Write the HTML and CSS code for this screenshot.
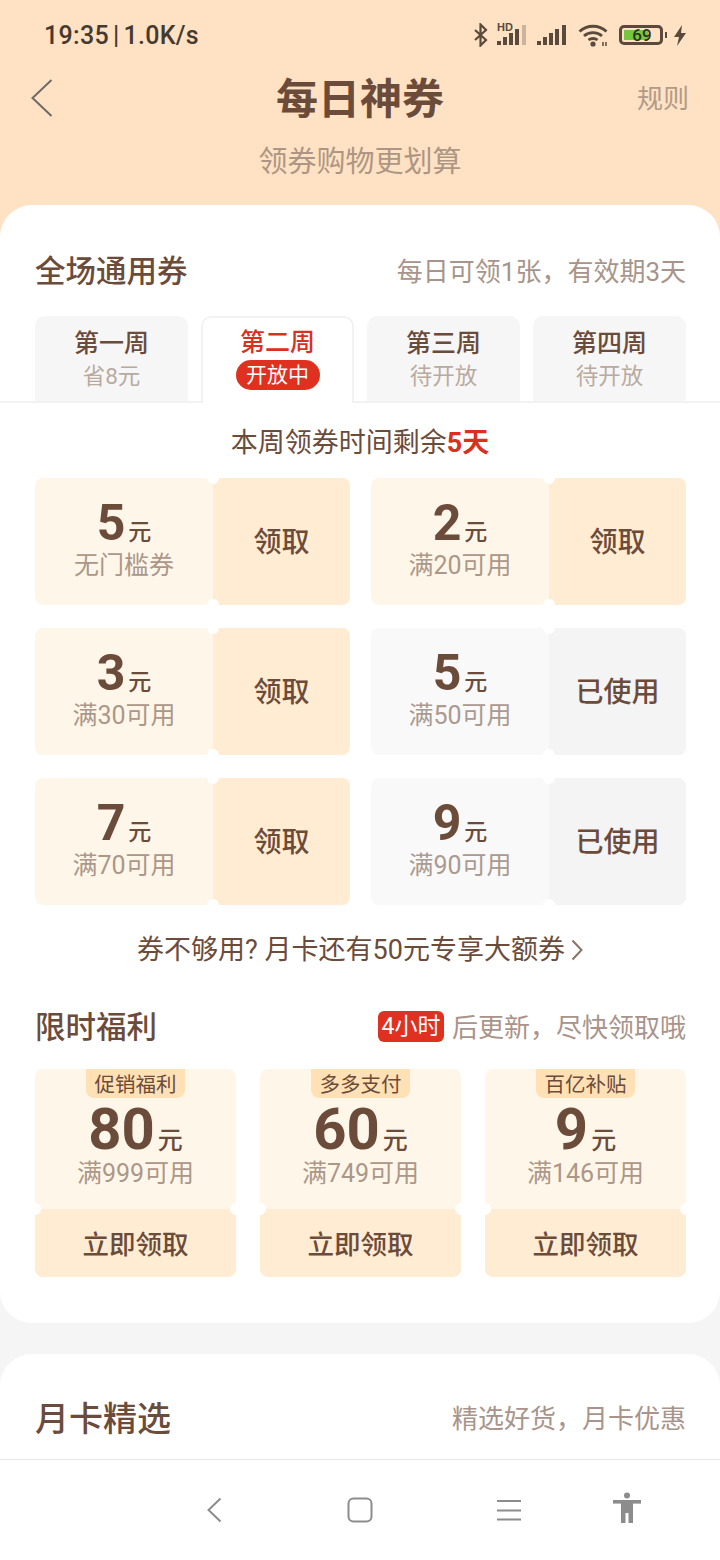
FILE: index.html
```html
<!DOCTYPE html>
<html lang="zh-CN">
<head>
<meta charset="utf-8">
<title>每日神券</title>
<link rel="stylesheet" href="styles.css">
</head>
<body>
<div class="phone">
  <div class="scroll">
    <header class="hero">
      <div class="status">
        <div class="status-text">19:35<span class="status-sep">|</span>1.0K/s</div>
        <div class="status-icons">
          <svg class="ic-bt" viewBox="0 0 16 24"><path d="M2 7l11 10-5.500 5.500V1.500L13 7 2 17" fill="none" stroke="#5a4a3d" stroke-width="2.200"/></svg>
          <div class="sig-wrap">
            <span class="hd">HD</span>
            <svg class="ic-sig" viewBox="0 0 30 21"><g fill="#5a4a3d"><rect x="0" y="17" width="4" height="4"/><rect x="6" y="13" width="4" height="8"/><rect x="12" y="9" width="4" height="12"/><rect x="18" y="5" width="4" height="16"/><rect x="25" y="1" width="4" height="20" opacity=".3"/></g></svg>
          </div>
          <svg class="ic-sig2" viewBox="0 0 30 21"><g fill="#5a4a3d"><rect x="0" y="17" width="4" height="4"/><rect x="6" y="13" width="4" height="8"/><rect x="12" y="9" width="4" height="12"/><rect x="18" y="5" width="4" height="16"/><rect x="25" y="1" width="4" height="20"/></g></svg>
          <svg class="ic-wifi" viewBox="0 0 30 24"><g fill="none" stroke="#5a4a3d" stroke-width="2.800"><path d="M1.500 8.500C9 1.500 21 1.500 28.500 8.500"/><path d="M6 13c5-4.500 13-4.500 18 0"/><path d="M10.500 17c2.500-2 6.500-2 9 0"/></g><circle cx="15" cy="21" r="2.600" fill="#5a4a3d"/><path d="M25 19v4M28 19v4" stroke="#5a4a3d" stroke-width="1.500"/></svg>
          <div class="battery">
            <div class="batt-body"><span class="batt-fill"></span><span class="batt-num">69</span></div>
            <span class="batt-nub"></span>
          </div>
          <svg class="ic-flash" viewBox="0 0 14 21"><path d="M9 0L1 12h5l-2 9 9-13H8z" fill="#5a4a3d"/></svg>
        </div>
      </div>
      <div class="topbar">
        <svg class="back" viewBox="0 0 22 38"><path d="M20.500 1L1.500 19l19 18" fill="none" stroke="#6e6a66" stroke-width="2"/></svg>
        <h1 class="title">每日神券</h1>
        <span class="rules">规则</span>
      </div>
      <p class="subtitle">领券购物更划算</p>
    </header>

    <section class="card main-card">
      <div class="sec-head">
        <h2 class="sec-title">全场通用券</h2>
        <span class="sec-note">每日可领1张，有效期3天</span>
      </div>
      <div class="tabs">
        <div class="tab"><span class="tab-name">第一周</span><span class="tab-sub">省8元</span></div>
        <div class="tab tab-active"><span class="tab-name">第二周</span><span class="tab-pill">开放中</span></div>
        <div class="tab"><span class="tab-name">第三周</span><span class="tab-sub">待开放</span></div>
        <div class="tab"><span class="tab-name">第四周</span><span class="tab-sub">待开放</span></div>
      </div>
      <p class="countdown">本周领券时间剩余<b class="count-num">5天</b></p>
      <div class="tickets">
        <div class="ticket">
          <div class="t-main"><div class="t-amt"><b>5</b><span>元</span></div><div class="t-cond">无门槛券</div></div>
          <div class="t-btn">领取</div>
        </div>
        <div class="ticket">
          <div class="t-main"><div class="t-amt"><b>2</b><span>元</span></div><div class="t-cond">满20可用</div></div>
          <div class="t-btn">领取</div>
        </div>
        <div class="ticket">
          <div class="t-main"><div class="t-amt"><b>3</b><span>元</span></div><div class="t-cond">满30可用</div></div>
          <div class="t-btn">领取</div>
        </div>
        <div class="ticket ticket-used">
          <div class="t-main"><div class="t-amt"><b>5</b><span>元</span></div><div class="t-cond">满50可用</div></div>
          <div class="t-btn">已使用</div>
        </div>
        <div class="ticket">
          <div class="t-main"><div class="t-amt"><b>7</b><span>元</span></div><div class="t-cond">满70可用</div></div>
          <div class="t-btn">领取</div>
        </div>
        <div class="ticket ticket-used">
          <div class="t-main"><div class="t-amt"><b>9</b><span>元</span></div><div class="t-cond">满90可用</div></div>
          <div class="t-btn">已使用</div>
        </div>
      </div>
      <div class="more">券不够用? 月卡还有50元专享大额券
        <svg class="more-arrow" viewBox="0 0 12 22"><path d="M1.500 1.500L10.500 11l-9 9.500" fill="none" stroke="#8a7264" stroke-width="2"/></svg>
      </div>

      <div class="sec-head sec-head-2">
        <h2 class="sec-title">限时福利</h2>
        <div class="limit-note"><span class="limit-badge">4小时</span><span class="sec-note">后更新，尽快领取哦</span></div>
      </div>
      <div class="deals">
        <div class="deal">
          <div class="deal-top"><span class="deal-tag">促销福利</span><div class="deal-amt"><b>80</b><span>元</span></div><div class="deal-cond">满999可用</div></div>
          <div class="deal-btn">立即领取</div>
        </div>
        <div class="deal">
          <div class="deal-top"><span class="deal-tag">多多支付</span><div class="deal-amt"><b>60</b><span>元</span></div><div class="deal-cond">满749可用</div></div>
          <div class="deal-btn">立即领取</div>
        </div>
        <div class="deal">
          <div class="deal-top"><span class="deal-tag">百亿补贴</span><div class="deal-amt"><b>9</b><span>元</span></div><div class="deal-cond">满146可用</div></div>
          <div class="deal-btn">立即领取</div>
        </div>
      </div>
    </section>

    <section class="card month-card">
      <div class="sec-head">
        <h2 class="month-title">月卡精选</h2>
        <span class="sec-note">精选好货，月卡优惠</span>
      </div>
    </section>
  </div>

  <nav class="navbar">
    <svg class="nav-back" viewBox="0 0 15 26"><path d="M13.500 1.500L1.500 13l12 11.500" fill="none" stroke="#8c8c8c" stroke-width="2"/></svg>
    <svg class="nav-home" viewBox="0 0 26 26"><rect x="1.500" y="1.500" width="23" height="23" rx="5" fill="none" stroke="#8c8c8c" stroke-width="2"/></svg>
    <svg class="nav-menu" viewBox="0 0 24 22"><path d="M0 2h24M0 11.500h24M0 20.500h24" fill="none" stroke="#8c8c8c" stroke-width="2"/></svg>
    <svg class="nav-person" viewBox="0 0 28 31"><g fill="#8c8c8c"><circle cx="14" cy="3.500" r="3"/><rect x="0" y="8" width="28" height="3.600"/><path d="M8 11h12v20h-4.500V21h-3v10H8z"/></g></svg>
  </nav>
</div>
</body>
</html>
```
FILE: styles.css
```css
* { box-sizing: border-box; }
html, body { margin: 0; padding: 0; }
body {
  width: 720px;
  height: 1560px;
  overflow: hidden;
  background: #f5f5f5;
  color: #6b4b3a;
  font-family: Roboto, "Noto Sans CJK SC", sans-serif;
}
h1, h2, p { margin: 0; font-weight: inherit; }

.phone { height: 1560px; display: flex; flex-direction: column; }
.scroll { flex: 1; min-height: 0; overflow: hidden; }

/* Header */
.hero { height: 240px; background: #fee2c3; margin-bottom: -35px; }
.status { height: 70px; padding: 22px 33px 0 44px; display: flex; justify-content: space-between; }
.status-text { font-weight: 500; font-size: 25px; line-height: 28px; letter-spacing: .3px; color: #463a30; }
.status-sep { margin: 0 4px; }
.status-icons { display: flex; align-items: flex-start; }
.ic-bt { width: 16px; height: 24px; margin-top: 1px; }
.sig-wrap { width: 30px; height: 22px; position: relative; margin-left: 8px; margin-top: 2px; }
.ic-sig { width: 30px; height: 21px; display: block; }
.hd { position: absolute; left: 0; top: -2px; font: 700 11px/11px "Liberation Sans", sans-serif; color: #5a4a3d; }
.ic-sig2 { width: 30px; height: 21px; margin: 2px 0 0 10px; }
.ic-wifi { width: 30px; height: 24px; margin: 1px 0 0 11px; }
.battery { display: flex; align-items: center; margin: 3px 0 0 11px; height: 20px; }
.batt-body { width: 44px; height: 20px; border: 3px solid #5a4a3d; border-radius: 5px; position: relative; overflow: hidden; display: flex; align-items: center; justify-content: center; }
.batt-fill { position: absolute; left: 2px; top: 2px; bottom: 2px; width: 24px; background: #76c63e; }
.batt-num { position: relative; font-weight: 500; font-size: 17px; line-height: 16px; color: #26331c; margin-left: 2px; }
.batt-nub { width: 2px; height: 6px; background: #5a4a3d; margin-left: 2px; }
.ic-flash { width: 14px; height: 21px; margin: 3px 0 0 6px; }

.topbar { height: 60px; position: relative; display: flex; justify-content: center; align-items: center; }
.back { position: absolute; left: 31px; top: 9px; width: 22px; height: 38px; }
.title { font-size: 42px; line-height: 60px; font-weight: 700; }
.rules { position: absolute; right: 31px; top: 11px; font-size: 26px; line-height: 36px; color: #b09a88; }
.subtitle { text-align: center; font-size: 29px; line-height: 40px; margin-top: 12px; color: #ae9684; }

/* Cards */
.card { background: #fff; border-radius: 32px; position: relative; }
.main-card { height: 1118px; }
.month-card { margin-top: 31px; height: 200px; padding-top: 45px; }

.sec-head { display: flex; justify-content: space-between; align-items: center; padding: 0 34px 0 35px; height: 40px; }
.main-card > .sec-head:first-child { position: relative; top: 47px; }
.sec-title { font-size: 30.500px; line-height: 40px; font-weight: 500; }
.month-title { font-size: 34px; line-height: 40px; font-weight: 500; }
.sec-note { font-size: 26px; line-height: 40px; color: #a8948a; }

/* Tabs */
.tabs { display: flex; gap: 13px; margin-top: 71px; padding: 0 34px 0 35px; border-bottom: 2px solid #f2f2f2; height: 87px; }
.tab { width: 153px; height: 85px; background: #f6f6f6; border-radius: 10px 10px 0 0; display: flex; flex-direction: column; align-items: center; padding-top: 12px; }
.tab-name { font-size: 25px; line-height: 32px; font-weight: 500; }
.tab-sub { font-size: 22.500px; line-height: 32px; color: #b9aaa0; }
.tab-active { height: 87px; background: #fff; border: 2px solid #f2f2f2; border-bottom: 0; padding-top: 9px; }
.tab-active .tab-name { color: #d9301f; }
.tab-pill { background: #e0301f; color: #fff; font-size: 21px; line-height: 30px; height: 30px; padding: 0 10.500px; border-radius: 15px; margin-top: 1px; }

.countdown { text-align: center; font-size: 27px; line-height: 40px; margin-top: 20px; }
.count-num { color: #d9301f; font-weight: 700; }

/* Tickets */
.tickets { display: grid; grid-template-columns: 315px 315px; column-gap: 21px; row-gap: 23px; padding-left: 35px; margin-top: 15px; }
.ticket { height: 127px; display: flex; position: relative; background: #fff6ea; border-radius: 8px; }
.ticket::before, .ticket::after { content: ""; position: absolute; left: 172px; width: 12px; height: 12px; background: #fff; border-radius: 50%; z-index: 1; }
.ticket::before { top: -6px; }
.ticket::after { bottom: -6px; }
.t-main { width: 178px; display: flex; flex-direction: column; align-items: center; padding-top: 17px; }
.t-amt { display: flex; align-items: baseline; height: 56px; line-height: 56px; }
.t-amt b { font-size: 50px; font-weight: 700; }
.t-amt span { font-size: 23px; font-weight: 500; margin-left: 3px; }
.t-cond { font-size: 25px; line-height: 30px; color: #ac9788; }
.t-btn { flex: 1; background: #ffecd2; border-radius: 0 8px 8px 0; display: flex; align-items: center; justify-content: center; font-size: 28px; font-weight: 500; padding-bottom: 4px; }
.ticket-used { background: #f9f9f9; }
.ticket-used .t-btn { background: #f4f4f4; }
.ticket-used .t-cond { color: #aa9a90; }

.more { display: flex; justify-content: center; align-items: center; font-size: 27px; line-height: 40px; margin-top: 25px; }
.more-arrow { width: 12px; height: 22px; margin-left: 6px; }

.sec-head-2 { margin-top: 38px; }
.limit-note { display: flex; align-items: center; }
.limit-badge { background: #e0301f; color: #fff; font-size: 23px; line-height: 31px; height: 31px; padding: 0 3.500px; border-radius: 6px; margin: 0 8px 4px 0; }

/* Deals */
.deals { display: flex; gap: 24px; padding-left: 35px; margin-top: 21px; }
.deal { width: 201px; height: 208px; position: relative; }
.deal::before, .deal::after { content: ""; position: absolute; top: 134px; width: 12px; height: 12px; background: #fff; border-radius: 50%; }
.deal::before { left: -6px; }
.deal::after { right: -6px; }
.deal-top { height: 140px; background: #fff6ea; border-radius: 8px 8px 0 0; display: flex; flex-direction: column; align-items: center; }
.deal-tag { width: 99px; height: 29px; background: #ffe1b5; border-radius: 0 0 8px 8px; font-size: 20.500px; line-height: 32px; text-align: center; white-space: nowrap; }
.deal-amt { display: flex; align-items: baseline; height: 58px; line-height: 58px; margin-top: 2px; }
.deal-amt b { font-size: 58px; font-weight: 700; }
.deal-amt span { font-size: 25px; font-weight: 500; margin-left: 3px; }
.deal-cond { font-size: 25px; line-height: 30px; margin-top: 1px; color: #ac9788; }
.deal-btn { height: 68px; background: #ffecd2; border-radius: 0 0 8px 8px; display: flex; align-items: center; justify-content: center; font-size: 26.500px; font-weight: 500; padding-bottom: 2px; }

/* Navigation bar */
.navbar { height: 101px; flex: none; background: #fff; border-top: 1px solid #e6e6e6; display: flex; align-items: flex-start; padding: 37px 0 0 207px; }
.nav-back { width: 15px; height: 26px; }
.nav-home { width: 26px; height: 26px; margin-left: 125px; }
.nav-menu { width: 24px; height: 22px; margin: 2px 0 0 124px; }
.nav-person { width: 28px; height: 31px; margin: -5px 0 0 92px; }
```
